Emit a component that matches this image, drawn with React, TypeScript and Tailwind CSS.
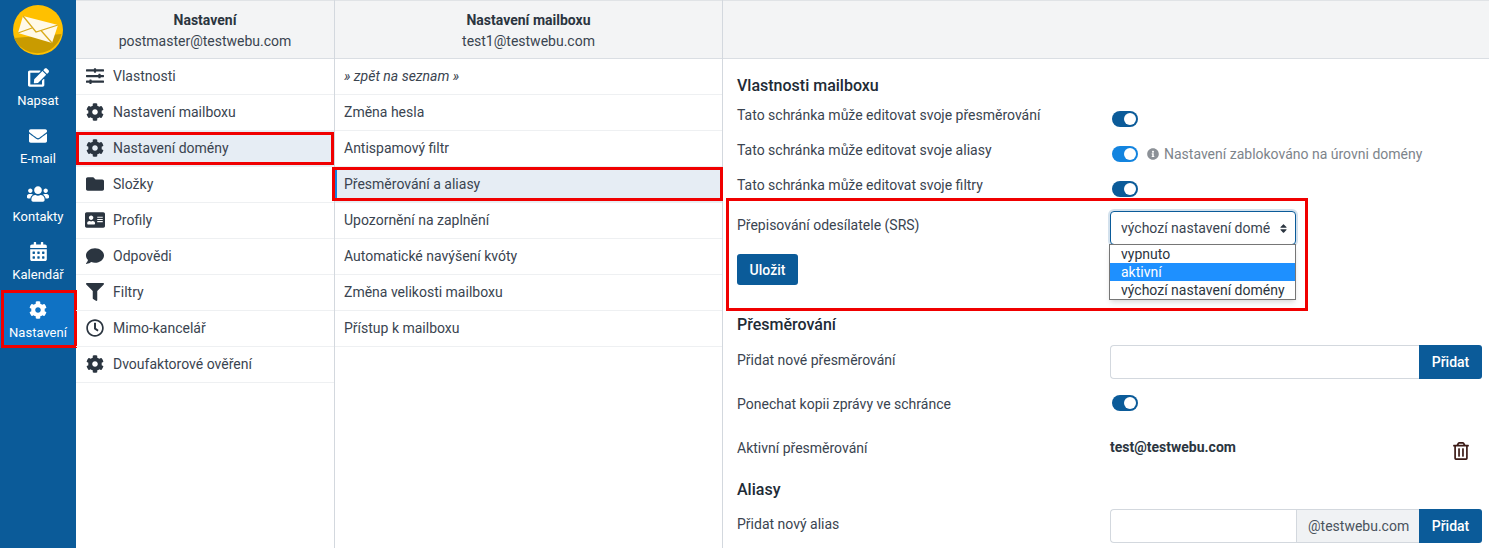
import { IconType } from 'react-icons';
import {
  FaAddressCard,
  FaCalendarAlt,
  FaCog,
  FaComment,
  FaEdit,
  FaEnvelope,
  FaFilter,
  FaFolder,
  FaInfoCircle,
  FaRegClock,
  FaRegTrashAlt,
  FaSlidersH,
  FaSort,
  FaUsers
} from 'react-icons/fa';

const navItems: { label: string; icon: IconType; size: number; active?: boolean }[] = [
  { label: 'Napsat', icon: FaEdit, size: 21 },
  { label: 'E-mail', icon: FaEnvelope, size: 18 },
  { label: 'Kontakty', icon: FaUsers, size: 22 },
  { label: 'Kalendář', icon: FaCalendarAlt, size: 19 },
  { label: 'Nastavení', icon: FaCog, size: 18, active: true }
];

const settingsItems: { label: string; icon: IconType; size: number; active?: boolean }[] = [
  { label: 'Vlastnosti', icon: FaSlidersH, size: 18 },
  { label: 'Nastavení mailboxu', icon: FaCog, size: 18 },
  { label: 'Nastavení domény', icon: FaCog, size: 18, active: true },
  { label: 'Složky', icon: FaFolder, size: 18 },
  { label: 'Profily', icon: FaAddressCard, size: 20 },
  { label: 'Odpovědi', icon: FaComment, size: 18 },
  { label: 'Filtry', icon: FaFilter, size: 18 },
  { label: 'Mimo-kancelář', icon: FaRegClock, size: 18 },
  { label: 'Dvoufaktorové ověření', icon: FaCog, size: 18 }
];

const mailboxItems = [
  'Změna hesla',
  'Antispamový filtr',
  'Přesměrování a aliasy',
  'Upozornění na zaplnění',
  'Automatické navýšení kvóty',
  'Změna velikosti mailboxu',
  'Přístup k mailboxu'
];

const Logo = () => (
  <svg width="50" height="50" viewBox="0 0 50 50" className="block">
    <circle cx="25" cy="25" r="25" fill="#ffc000" />
    <path d="M1.2 33 L48.5 29 A25 25 0 0 1 1.2 33 Z" fill="#c99b00" />
    <path d="M10 11 L45 20 L39 38 L5 28 Z" fill="#fff9e8" />
    <path
      d="M10 11 L23 27 L45 20 M5 28 L19 23 M39 38 L28 25.5"
      stroke="#d9ab1a"
      strokeWidth="1.3"
      fill="none"
    />
  </svg>
);

const Toggle = ({ light = false }: { light?: boolean }) => (
  <span
    className={`flex items-center justify-end w-[26px] h-4 rounded-full pr-[2px] ${
      light ? 'bg-[#1384df]' : 'bg-[#0b5b99]'
    }`}>
    <span className="block w-3 h-3 rounded-full bg-white" />
  </span>
);

const Heading = ({ children, className }: { children: string; className: string }) => (
  <h2 className={`text-base leading-6 font-medium text-[#212b36] ${className}`}>{children}</h2>
);

const Row = ({
  label,
  className,
  children
}: {
  label: string;
  className: string;
  children: React.ReactNode;
}) => (
  <div className={`flex ${className}`}>
    <label className="w-[373px] shrink-0 leading-5 text-[#3a4450]">{label}</label>
    <div className="flex-1 min-w-0">{children}</div>
  </div>
);

const AddButton = () => (
  <button className="w-[63px] h-full bg-[#0b5b99] text-white font-medium rounded-r-[3px]">Přidat</button>
);

export default function App() {
  return (
    <div
      className="flex w-[1489px] h-[548px] overflow-hidden bg-white text-sm text-[#3a4450]"
      style={{ fontFamily: 'Roboto, sans-serif' }}>
      <nav className="w-[76px] shrink-0 bg-[#0b5b99] text-white flex flex-col items-center pt-[5px]">
        <Logo />
        <ul className="w-full mt-[3px]">
          {navItems.map(({ label, icon: Icon, size, active }) => (
            <li
              key={label}
              className={`relative h-[58px] flex flex-col items-center text-[13px] leading-4 ${
                active ? 'bg-[#0f72c4]' : ''
              }`}>
              <span className="h-[30px] pt-[9px] flex items-center">
                <Icon size={size} />
              </span>
              <span className="mt-[5px]">{label}</span>
              {active && (
                <span className="absolute left-[1px] top-0 w-[76px] h-[58px] border-[3px] border-[#f00000]" />
              )}
            </li>
          ))}
        </ul>
      </nav>

      <section className="w-[259px] shrink-0 border-r border-[#d3d8de] flex flex-col">
        <header className="h-[59px] shrink-0 border-y border-t-[#e0e3e6] border-b-[#dadee3] bg-[#f3f4f5] text-center pt-[9px] leading-5">
          <div className="font-bold text-[#2b3540]">Nastavení</div>
          <div className="mt-[1px]">postmaster@testwebu.com</div>
        </header>
        <ul>
          {settingsItems.map(({ label, icon: Icon, size, active }) => (
            <li
              key={label}
              className={`relative h-9 flex items-center border-b border-[#eef0f2] pb-[1px] ${
                active ? 'bg-[#e6edf4]' : ''
              }`}>
              <span className="w-[37px] flex justify-center text-[#2b3540]">
                <Icon size={size} />
              </span>
              <span>{label}</span>
              {active && (
                <span className="absolute inset-x-0 top-[1px] bottom-[1px] border-[3px] border-[#f00000]" />
              )}
            </li>
          ))}
        </ul>
      </section>

      <section className="w-[388px] shrink-0 border-r border-[#d3d8de] flex flex-col">
        <header className="h-[59px] shrink-0 border-y border-t-[#e0e3e6] border-b-[#dadee3] bg-[#f3f4f5] text-center pt-[9px] leading-5">
          <div className="font-bold text-[#2b3540]">Nastavení mailboxu</div>
          <div className="mt-[1px]">test1@testwebu.com</div>
        </header>
        <ul>
          <li className="h-9 flex items-center pl-[9px] border-b border-[#eef0f2] pb-[1px] italic">
            » zpět na seznam »
          </li>
          {mailboxItems.map((item) => {
            const active = item === 'Přesměrování a aliasy';
            return (
              <li
                key={item}
                className={`relative h-9 flex items-center pl-[9px] border-b border-[#eef0f2] pb-[1px] ${
                  active ? 'bg-[#e6edf4]' : ''
                }`}>
                {item}
                {active && (
                  <>
                    <span className="absolute left-0 top-0 bottom-[1px] w-[2px] bg-[#1384df]" />
                    <span className="absolute left-[-3px] right-[-1px] top-0 bottom-[1px] border-[3px] border-[#f00000]" />
                  </>
                )}
              </li>
            );
          })}
        </ul>
      </section>

      <main className="flex-1 min-w-0 flex flex-col">
        <header className="h-[59px] shrink-0 border-y border-t-[#e0e3e6] border-b-[#dadee3] bg-[#f3f4f5]" />
        <div className="relative pl-[14px] pr-[7px]">
          <Heading className="mt-[15px]">Vlastnosti mailboxu</Heading>
          <Row label="Tato schránka může editovat svoje přesměrování" className="mt-[7px] h-[35px]">
            <div className="pt-[6px] pl-[2px]">
              <Toggle />
            </div>
          </Row>
          <Row label="Tato schránka může editovat svoje aliasy" className="h-[35px]">
            <div className="flex items-center mt-[6px] pl-[2px] h-4 text-[#7d848b]">
              <Toggle light />
              <FaInfoCircle size={12} className="ml-[9px] mr-[5px] text-[#8c9197]" />
              Nastavení zablokováno na úrovni domény
            </div>
          </Row>
          <Row label="Tato schránka může editovat svoje filtry" className="h-[40px]">
            <div className="pt-[6px] pl-[2px]">
              <Toggle />
            </div>
          </Row>
          <Row label="Přepisování odesílatele (SRS)" className="h-[69px]">
            <div className="relative w-[186px] h-[34px] -mt-[4px]">
              <div className="flex items-center justify-between h-full pl-[10px] pr-[6px] bg-white border border-[#0b5b99] rounded-[4px] shadow-[0_0_0_2px_rgba(11,91,153,0.18)] text-[#3a4450]">
                <span className="whitespace-nowrap overflow-hidden">výchozí nastavení domé</span>
                <FaSort size={11} className="shrink-0 text-[#2b3540]" />
              </div>
              <ul className="absolute z-10 left-[-1px] top-[33px] w-[187px] bg-white border border-[#767676] shadow-md leading-[18px] text-[#2b3540]">
                <li className="pl-[11px] h-[18px]">vypnuto</li>
                <li className="pl-[11px] h-[18px] bg-[#1e90ff] text-white">aktivní</li>
                <li className="pl-[11px] h-[18px]">výchozí nastavení domény</li>
              </ul>
            </div>
          </Row>
          <button className="block -mt-[30px] w-[61px] h-[31px] bg-[#0b5b99] text-white font-medium rounded-[3px]">
            Uložit
          </button>
          <Heading className="mt-[28px]">Přesměrování</Heading>
          <Row label="Přidat nové přesměrování" className="mt-[13px] h-[41px]">
            <div className="flex h-[34px] -mt-[5px]">
              <div className="flex-1 border border-r-0 border-[#d3d8de] rounded-l-[4px]" />
              <AddButton />
            </div>
          </Row>
          <Row label="Ponechat kopii zprávy ve schránce" className="h-[44px] pt-[3px]">
            <div className="pl-[2px] mt-[1px]">
              <Toggle />
            </div>
          </Row>
          <Row label="Aktivní přesměrování" className="h-[40px] pt-[3px]">
            <div className="flex justify-between items-start pr-[12px]">
              <b className="font-bold text-[#2b3540] leading-5 -mt-[1px]">test@testwebu.com</b>
              <FaRegTrashAlt size={18} className="mt-[4px] text-[#3b1a16]" />
            </div>
          </Row>
          <Heading className="mt-[3px]">Aliasy</Heading>
          <Row label="Přidat nový alias" className="mt-[12px] h-[45px]">
            <div className="flex h-[34px] -mt-[5px]">
              <div className="flex-1 border border-r-0 border-[#d3d8de] rounded-l-[4px]" />
              <span className="w-[123px] flex items-center pl-[11px] bg-[#f0f2f4] border-y border-l border-[#d3d8de] text-[#4a535d]">
                @testwebu.com
              </span>
              <AddButton />
            </div>
          </Row>
          <span className="absolute left-[3px] top-[139px] w-[582px] h-[113px] border-[3px] border-[#f00000] pointer-events-none" />
        </div>
      </main>
    </div>
  );
}
